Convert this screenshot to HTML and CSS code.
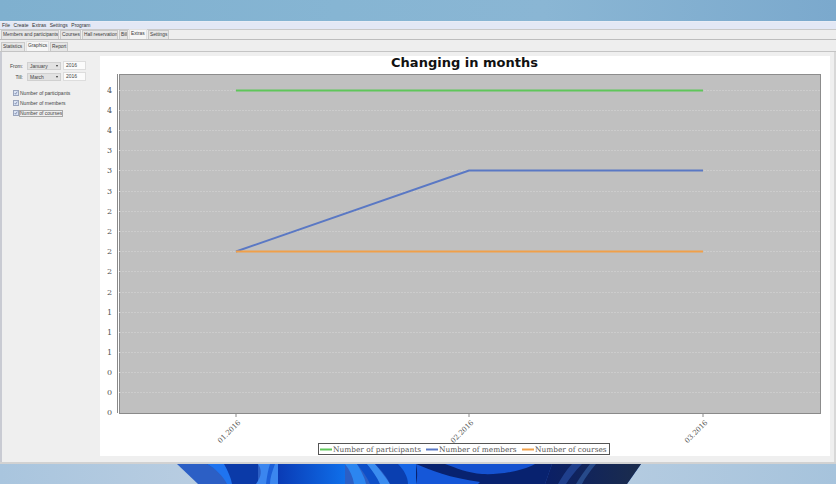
FILE: index.html
```html
<!DOCTYPE html>
<html lang="en">
<head>
<meta charset="utf-8">
<title>Changing in months</title>
<link rel="stylesheet" href="styles.css">
</head>
<body>
<div class="desktop-top"></div>
<main class="window">
  <nav class="menubar">
    <span>File</span><span>Create</span><span>Extras</span><span>Settings</span><span>Program</span>
  </nav>
  <div class="tabs main-tabs">
    <span class="tab">Members and participants</span>
    <span class="tab">Courses</span>
    <span class="tab">Hall reservation</span>
    <span class="tab">Bill</span>
    <span class="tab active">Extras</span>
    <span class="tab">Settings</span>
  </div>
  <div class="tabs sub-tabs">
    <span class="tab">Statistics</span>
    <span class="tab active">Graphics</span>
    <span class="tab">Report</span>
  </div>
  <div class="content">
    <aside class="side">
      <div class="filter">
        <label>From:</label>
        <span class="select">January<i></i></span>
        <span class="input">2016</span>
      </div>
      <div class="filter">
        <label>Till:</label>
        <span class="select">March<i></i></span>
        <span class="input">2016</span>
      </div>
      <ul class="checks">
        <li><span class="box"><svg viewBox="0 0 8 8"><path d="M1.5 4.2 3.2 6.4 6.6 1.3"/></svg></span>Number of participants</li>
        <li><span class="box"><svg viewBox="0 0 8 8"><path d="M1.5 4.2 3.2 6.4 6.6 1.3"/></svg></span>Number of members</li>
        <li class="focus"><span class="box"><svg viewBox="0 0 8 8"><path d="M1.5 4.2 3.2 6.4 6.6 1.3"/></svg></span><b>Number of courses</b></li>
      </ul>
    </aside>
    <section class="chart">
      <svg class="plot" viewBox="100 56 730 401" width="730" height="401">
        <text class="title" x="464.500" y="67">Changing in months</text>
        <rect class="plot-bg" x="119.500" y="74.500" width="701" height="339"/>
        <path class="axis" d="M117.500 74V413M119 413.500H820"/>
        <g class="grid">
          <path d="M119 90.500H820M119 110.500H820M119 130.500H820M119 150.500H820M119 170.500H820M119 191.500H820M119 211.500H820M119 231.500H820M119 251.500H820M119 271.500H820M119 292.500H820M119 312.500H820M119 332.500H820M119 352.500H820M119 372.500H820M119 392.500H820"/>
        </g>
        <g class="yticks">
          <text x="112" y="93">4</text><text x="112" y="113">4</text><text x="112" y="133">4</text>
          <text x="112" y="153">3</text><text x="112" y="173">3</text><text x="112" y="194">3</text>
          <text x="112" y="214">2</text><text x="112" y="234">2</text><text x="112" y="254">2</text>
          <text x="112" y="274">2</text><text x="112" y="295">2</text><text x="112" y="315">1</text>
          <text x="112" y="335">1</text><text x="112" y="355">1</text><text x="112" y="375">0</text>
          <text x="112" y="395">0</text><text x="112" y="415">0</text>
        </g>
        <path class="line green" d="M236 90.500H703"/>
        <path class="line blue" d="M236 251.500 469 170.500H703"/>
        <path class="line orange" d="M236 251.500H703"/>
        <path class="axis" d="M236 414v3M469 414v3M703 414v3"/>
        <g class="xticks">
          <text transform="translate(241 423) rotate(-45)">01.2016</text>
          <text transform="translate(474 423) rotate(-45)">02.2016</text>
          <text transform="translate(708 423) rotate(-45)">03.2016</text>
        </g>
        <rect class="legend" x="318.500" y="443.500" width="291" height="11"/>
        <path class="line green" d="M320 449.500H332"/>
        <text class="legend-text" x="333" y="452">Number of participants</text>
        <path class="line blue" d="M426 449.500H438"/>
        <text class="legend-text" x="439" y="452">Number of members</text>
        <path class="line orange" d="M522 449.500H534"/>
        <text class="legend-text" x="535" y="452">Number of courses</text>
      </svg>
    </section>
  </div>
</main>
<div class="wallpaper">
  <svg viewBox="0 0 836 20" width="836" height="20">
    <defs>
      <linearGradient id="mid" x1="0" x2="1" y1="0" y2="0">
        <stop offset="0" stop-color="#0a3bb5"/>
        <stop offset="1" stop-color="#0f6fea"/>
      </linearGradient>
      <linearGradient id="right" x1="0" x2="1" y1="0" y2="0">
        <stop offset="0" stop-color="#0a1f66"/>
        <stop offset="1" stop-color="#1b2c4c"/>
      </linearGradient>
    </defs>
    <path d="M177 0H641L627 20H198Z" fill="#2c5fc5"/>
    <path d="M207 0H258V20H230C226 12 216 5 207 0Z" fill="#0b3aa8"/>
    <path d="M207 0H224C228 7 231 14 232 20H227C223 12 216 5 207 0Z" fill="#1f74f0"/>
    <path d="M258 0H278V20H256C262 12 262 6 258 0Z" fill="#3b86ef"/>
    <path d="M270 0H275C272 8 270 14 270 20H266C267 12 268 6 270 0Z" fill="#1c5fd8"/>
    <path d="M278 0H345V20H278Z" fill="url(#mid)"/>
    <path d="M345 0H357C361 7 365 14 366 20H354C353 13 350 6 345 0Z" fill="#2c86f0"/>
    <path d="M357 0H367C373 7 378 14 380 20H370C367 13 362 6 357 0Z" fill="#0d4fc8"/>
    <path d="M367 0H375C381 7 386 14 390 20H380C377 13 372 6 367 0Z" fill="#3a8cf0"/>
    <path d="M375 0H410V20H390C387 13 381 6 375 0Z" fill="#0a3fb0"/>
    <path d="M398 0H416V20H408C408 13 404 6 398 0Z" fill="#1766e6"/>
    <path d="M416 20V0H552L545 20Z" fill="#08226f"/>
    <path d="M416 20C418 12 417 5 416 0C430 6 450 14 480 18L478 20Z" fill="#1557d8"/>
    <path d="M445 0H535C522 7 500 11 482 10C468 9 456 4 445 0Z" fill="#1552d0"/>
    <path d="M552 0H641L627 20H545Z" fill="url(#right)"/>
    <path d="M572 0H582C575 7 570 14 566 20H558C562 13 566 6 572 0Z" fill="#1f3f8c"/>
    <path d="M590 0H596C590 7 585 14 582 20H576C580 13 585 6 590 0Z" fill="#274a8a"/>
  </svg>
</div>
</body>
</html>
```

FILE: styles.css
```css
* { box-sizing: border-box; }
html, body { margin: 0; padding: 0; }
body {
  width: 836px;
  height: 484px;
  overflow: hidden;
  font-family: "Liberation Sans", Arial, sans-serif;
  color: #333;
  background: linear-gradient(90deg, #a9c5de 0%, #bccfe2 30%, #bcd0e3 60%, #a6c3dc 100%);
}
.desktop-top {
  height: 21px;
  background: linear-gradient(90deg, #7fb0cf 0%, #86b5d3 40%, #8ab6d4 65%, #7ba9cd 100%);
}
.window {
  height: 443px;
  background: #eeeeee;
  border-top: 1px solid #e9edf6;
  border-bottom: 2px solid #d2d2d2;
  display: flex;
  flex-direction: column;
}
.menubar {
  height: 7px;
  display: flex;
  gap: 3.5px;
  padding-left: 2px;
  align-items: center;
  font-size: 5px;
  line-height: 7px;
  background: #e3e8f5;
  color: #333;
  flex: none;
}
.tabs {
  display: flex;
  align-items: flex-end;
  flex: none;
  padding-left: 1px;
  font-size: 4.8px;
}
.main-tabs {
  height: 11px;
  border-top: 1px solid #c9c9c9;
  border-bottom: 1px solid #bdbdbd;
  background: #eee;
}
.sub-tabs {
  height: 11px;
  margin-top: 1px;
  border-bottom: 1px solid #c4c4c4;
  background: #eee;
}
.tab {
  height: 9px;
  line-height: 8px;
  padding: 0 1px;
  margin-right: 1px;
  background: #e6e6e6;
  border: 1px solid #c9c9c9;
  border-bottom: 0;
  white-space: nowrap;
  overflow: hidden;
  color: #3a3a3a;
}
.tab.active {
  height: 10px;
  background: #f6f6f6;
  border-color: #e2e2e2;
}
.main-tabs .tab:nth-child(1) { width: 58px; }
.main-tabs .tab:nth-child(2) { width: 21px; }
.main-tabs .tab:nth-child(3) { width: 36px; }
.main-tabs .tab:nth-child(4) { width: 9px; }
.main-tabs .tab:nth-child(5) { width: 18px; }
.main-tabs .tab:nth-child(6) { width: 21px; }
.sub-tabs .tab:nth-child(1) { width: 24px; }
.sub-tabs .tab:nth-child(2) { width: 23px; }
.sub-tabs .tab:nth-child(3) { width: 18px; }
.content {
  flex: 1;
  min-height: 0;
  display: flex;
  padding-top: 4px;
  background: #efefef;
  border-left: 2px solid #c9cbd3;
  border-right: 2px solid #d8d8d8;
}
.side {
  width: 98px;
  flex: none;
  padding-top: 5px;
  font-size: 5px;
}
.filter {
  height: 9px;
  margin-bottom: 2px;
  display: flex;
  align-items: center;
}
.filter label {
  width: 22px;
  padding-right: 1px;
  text-align: right;
  color: #444;
}
.select {
  width: 34px;
  height: 8px;
  margin-left: 3px;
  padding-left: 2px;
  background: #e2e2e2;
  border: 1px solid #d0d0d0;
  line-height: 6px;
  position: relative;
  color: #444;
}
.select i {
  position: absolute;
  right: 2px;
  top: 2px;
  width: 0;
  height: 0;
  border: 1.5px solid transparent;
  border-top: 2px solid #333;
  border-bottom: 0;
}
.input {
  width: 23px;
  height: 9px;
  margin-left: 2px;
  padding-left: 2px;
  line-height: 7px;
  background: #fbfbfb;
  border: 1px solid #ddd;
  color: #444;
}
.checks {
  list-style: none;
  margin: 7px 0 0;
  padding: 0 0 0 11px;
}
.checks li {
  height: 10px;
  display: flex;
  align-items: center;
  gap: 1px;
  color: #444;
}
.checks b {
  font-weight: normal;
  outline: 1px solid #a8a8a8;
  line-height: 5px;
}
.box {
  width: 6px;
  height: 6px;
  background: #dbe4f4;
  border: 1px solid #9aa5bd;
  flex: none;
  display: flex;
}
.box svg { width: 100%; height: 100%; }
.box path { fill: none; stroke: #3a4a78; stroke-width: 1; }
.chart {
  width: 730px;
  flex: none;
  height: 400px;
  background: #fff;
}
.plot { display: block; }
.title {
  font: bold 13px "DejaVu Sans", sans-serif;
  text-anchor: middle;
  fill: #111;
}
.plot-bg { fill: #c0c0c0; stroke: #8c8c8c; stroke-width: 1; }
.axis { fill: none; stroke: #8a8a8a; stroke-width: 1; }
.grid path { fill: none; stroke: #cccccc; stroke-width: 1; stroke-dasharray: 2 1; }
.yticks text { font: 8px "DejaVu Serif", serif; text-anchor: end; fill: #555; }
.xticks text { font: 7px "DejaVu Serif", serif; text-anchor: end; fill: #555; }
.line { fill: none; stroke-width: 2; }
.green { stroke: #5fc65a; }
.blue { stroke: #5a78c4; }
.orange { stroke: #f0a04a; }
.legend { fill: #fff; stroke: #555; stroke-width: 1; }
.legend-text { font: 7.400px "DejaVu Serif", serif; fill: #555; }
.wallpaper { height: 20px; }
.wallpaper svg { display: block; }
```
